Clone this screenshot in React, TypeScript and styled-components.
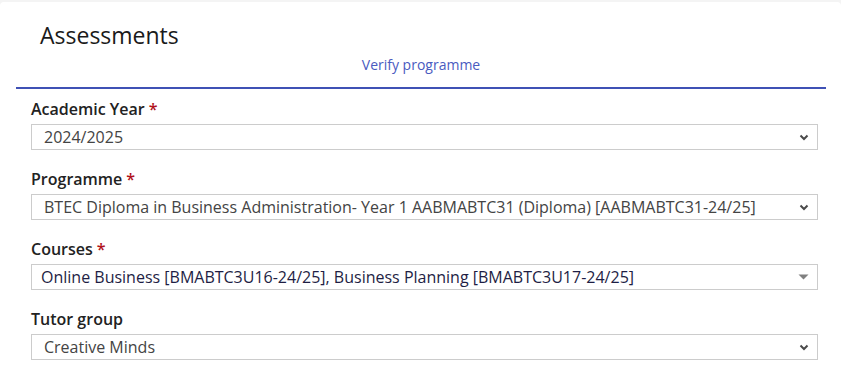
import styled, { createGlobalStyle } from "styled-components";

const GlobalStyle = createGlobalStyle`
  body {
    margin: 0;
    background: #f4f4f4;
    font-family: "Open Sans", "Noto Sans", sans-serif;
  }
`;

const Card = styled.div`
  margin-top: 2px;
  background: #fff;
  border-radius: 4px 4px 0 0;
  padding: 0 15px 18px 16px;
  min-height: 372px;
  box-sizing: border-box;
`;

const Header = styled.div`
  display: flex;
  flex-direction: column;
  border-bottom: 2px solid #3f51b5;
  padding-bottom: 13px;
`;

const Title = styled.h1`
  margin: 0;
  padding: 16px 0 0 24px;
  font-family: "Open Sans", sans-serif;
  font-weight: 400;
  font-size: 23px;
  line-height: 34px;
  color: #1a1a1a;
`;

const VerifyLink = styled.a`
  align-self: center;
  margin-top: 3px;
  font-size: 14px;
  line-height: 19px;
  color: #4a5bbf;
  text-decoration: none;
  cursor: pointer;
`;

const Form = styled.div`
  display: flex;
  flex-direction: column;
  padding: 9px 8px 0 15px;
  gap: 18px;
`;

const Field = styled.div`
  display: flex;
  flex-direction: column;
  gap: 4px;
`;

const Label = styled.label`
  font-size: 16px;
  font-weight: 600;
  line-height: 22px;
  color: #222;
`;

const Required = styled.span`
  color: #b0121b;
  margin-left: 4px;
`;

const SelectBox = styled.div<{ $multi?: boolean }>`
  display: flex;
  align-items: center;
  justify-content: space-between;
  height: 26px;
  box-sizing: border-box;
  border: 1px solid #cccccc;
  padding: 0 8px 0 ${(p) => (p.$multi ? "9px" : "12px")};
  font-size: 16px;
  color: ${(p) => (p.$multi ? "#1e1e44" : "#444")};
  background: #fff;
  cursor: pointer;
`;

const Value = styled.span`
  white-space: nowrap;
  overflow: hidden;
  line-height: 24px;
`;

const Chevron = () => (
  <svg width="10" height="7" viewBox="0 0 10 7">
    <path d="M1.5 1.5 L5 5 L8.5 1.5" fill="none" stroke="#4a4a4a" strokeWidth="2" />
  </svg>
);

const Caret = () => (
  <svg width="11" height="6" viewBox="0 0 11 6">
    <path d="M0.5 0.5 L10.5 0.5 L5.5 5.5 Z" fill="#808080" />
  </svg>
);

const fields = [
  { label: "Academic Year", required: true, value: "2024/2025" },
  {
    label: "Programme",
    required: true,
    value:
      "BTEC Diploma in Business Administration- Year 1 AABMABTC31 (Diploma) [AABMABTC31-24/25]",
  },
  {
    label: "Courses",
    required: true,
    multi: true,
    value: "Online Business [BMABTC3U16-24/25], Business Planning [BMABTC3U17-24/25]",
  },
  { label: "Tutor group", required: false, value: "Creative Minds" },
];

export default function App() {
  return (
    <>
      <GlobalStyle />
      <Card>
        <Header>
          <Title>Assessments</Title>
          <VerifyLink>Verify programme</VerifyLink>
        </Header>
        <Form>
          {fields.map((f) => (
            <Field key={f.label}>
              <Label>
                {f.label}
                {f.required && <Required>*</Required>}
              </Label>
              <SelectBox $multi={f.multi}>
                <Value>{f.value}</Value>
                {f.multi ? <Caret /> : <Chevron />}
              </SelectBox>
            </Field>
          ))}
        </Form>
      </Card>
    </>
  );
}
